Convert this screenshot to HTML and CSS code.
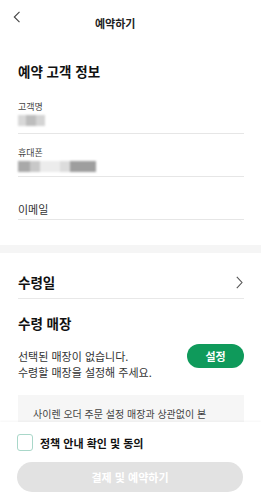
FILE: index.html
```html
<!DOCTYPE html>
<html lang="ko">
<head>
<meta charset="utf-8">
<link rel="stylesheet" href="styles.css">
</head>
<body>
<header class="topbar">
  <button class="back" aria-label="뒤로">
    <svg width="8" height="12" viewBox="0 0 8 12"><path d="M6.5 0.8 L1.3 6 L6.5 11.2" fill="none" stroke="#444" stroke-width="1.1"/></svg>
  </button>
  <h1 class="title">예약하기</h1>
</header>

<main class="content">
  <section class="customer">
    <h2 class="section-title">예약 고객 정보</h2>
    <div class="field first">
      <div class="field-label">고객명</div>
      <div class="blur-value name"><span></span><span></span><span></span></div>
    </div>
    <div class="field">
      <div class="field-label">휴대폰</div>
      <div class="blur-value phone"><span></span><span></span><span></span><span></span><span></span></div>
    </div>
    <div class="field email">
      <div class="email-label">이메일</div>
    </div>
  </section>

  <div class="band"></div>

  <section class="pickup">
    <div class="date-row">
      <h2 class="section-title">수령일</h2>
      <svg class="chev" width="7" height="13" viewBox="0 0 7 13"><path d="M0.8 0.8 L6 6.5 L0.8 12.2" fill="none" stroke="#555" stroke-width="1.1"/></svg>
    </div>
    <h2 class="section-title store-title">수령 매장</h2>
    <div class="store-row">
      <p class="store-msg">선택된 매장이 없습니다.<br>수령할 매장을 설정해 주세요.</p>
      <button class="set-btn">설정</button>
    </div>
    <div class="notice">
      <p>사이렌 오더 주문 설정 매장과 상관없이 본</p>
    </div>
  </section>
</main>

<footer class="bottom">
  <label class="agree">
    <span class="check"></span>
    <span class="agree-text">정책 안내 확인 및 동의</span>
  </label>
  <button class="pay-btn">결제 및 예약하기</button>
</footer>
</body>
</html>
```

FILE: styles.css
```css
* { box-sizing: border-box; margin: 0; padding: 0; }
html, body { background: #fff; }
body {
  font-family: "Noto Sans CJK KR", "Noto Sans", sans-serif;
  color: #111;
  width: 261px;
  height: 500px;
  overflow: hidden;
  display: flex;
  flex-direction: column;
}
button { font-family: inherit; border: none; background: none; }

.topbar {
  height: 44px;
  flex: none;
  display: flex;
  align-items: flex-start;
  padding: 11px 0 0 13px;
}
.back { width: 8px; height: 12px; display: block; }
.back svg { display: block; }
.title {
  font-size: 11px;
  font-weight: 700;
  margin: 4px 0 0 74px;
  line-height: 16px;
  color: #222;
}

.content { flex: 1 1 auto; min-height: 0; overflow: hidden; }

.customer { padding: 17px 17px 0 18px; }
.section-title {
  font-size: 13.5px;
  font-weight: 700;
  line-height: 20px;
  color: #111;
}
.field {
  border-bottom: 1px solid #e6e6e6;
  padding-top: 13px;
  height: 43px;
}
.field.first { padding-top: 20px; height: 53px; }
.field-label {
  font-size: 9px;
  line-height: 12px;
  color: #444;
}
.blur-value { display: flex; margin-top: 2px; height: 11px; filter: blur(1.2px); }
.blur-value span { display: block; height: 11px; }
.name span:nth-child(1) { width: 8px; background: #d8d8d8; }
.name span:nth-child(2) { width: 10px; background: #bdbdbd; }
.name span:nth-child(3) { width: 9px; background: #d4d4d4; }
.phone span:nth-child(1) { width: 12px; background: #a9a9a9; }
.phone span:nth-child(2) { width: 10px; background: #c8c8c8; }
.phone span:nth-child(3) { width: 20px; background: #ececec; }
.phone span:nth-child(4) { width: 10px; background: #dcdcdc; }
.phone span:nth-child(5) { width: 26px; background: #9e9e9e; }

.field.email { height: 43px; padding-top: 24px; }
.email-label { font-size: 11px; line-height: 16px; color: #333; }

.band { height: 8px; background: #f5f5f5; margin-top: 25px; }

.pickup { padding: 0 17px 0 18px; }
.date-row {
  display: flex;
  justify-content: space-between;
  align-items: center;
  height: 46px;
  padding-top: 13px;
  border-bottom: 1px solid #e8e8e8;
}
.chev { margin-right: 1px; display: block; }
.store-title { margin-top: 14px; }
.store-row {
  display: flex;
  justify-content: space-between;
  align-items: flex-start;
  margin-top: 11px;
}
.store-msg { font-size: 11px; line-height: 16px; color: #333; margin-top: 4px; }
.set-btn {
  width: 57px;
  height: 24px;
  border-radius: 12px;
  background: #0f9a5b;
  color: #fff;
  font-size: 11px;
  font-weight: 700;
}
.notice {
  margin-top: 15px;
  background: #f6f6f6;
  padding: 11px 15px 20px;
}
.notice p { font-size: 10px; line-height: 16px; color: #444; }

.bottom {
  flex: none;
  height: 78px;
  background: #fff;
  box-shadow: 0 -1px 2px rgba(0,0,0,0.04);
  padding: 12px 18px 0 17px;
  position: relative;
}
.agree { display: flex; align-items: center; height: 17px; }
.check {
  width: 16px;
  height: 17px;
  border: 1px solid #a9d7c9;
  border-radius: 3px;
  display: block;
}
.agree-text {
  margin-left: 7px;
  font-size: 11px;
  font-weight: 700;
  color: #111;
}
.pay-btn {
  margin-top: 11px;
  width: 226px;
  height: 30px;
  border-radius: 15px;
  background: #e2e2e2;
  color: #fff;
  font-size: 11px;
  font-weight: 700;
  display: block;
}
```
